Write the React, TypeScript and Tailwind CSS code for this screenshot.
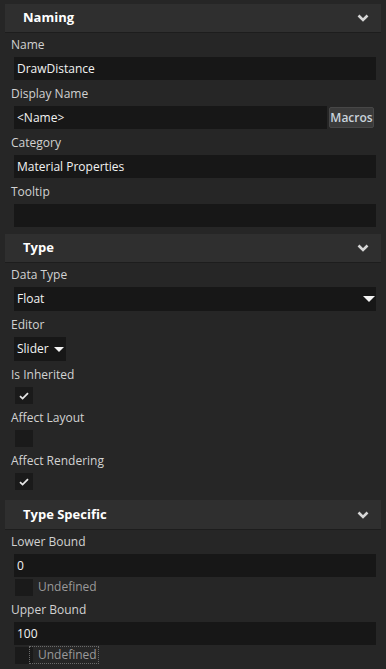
import React from "react";

const font = { fontFamily: '"Open Sans", "Noto Sans", sans-serif' };

const Chevron = () => (
  <svg width="12" height="8" viewBox="0 0 12 8" className="block">
    <path d="M1.5 1.5 L6 6 L10.5 1.5" fill="none" stroke="#d6d6d6" strokeWidth="2.6" />
  </svg>
);

const Caret = ({ w = 12, h = 6 }: { w?: number; h?: number }) => (
  <svg width={w} height={h} viewBox={`0 0 ${w} ${h}`} className="block">
    <polygon points={`0,0 ${w},0 ${w / 2},${h}`} fill="#f4f4f4" />
  </svg>
);

const Check = () => (
  <svg width="10" height="8" viewBox="0 0 10 8" className="block">
    <path d="M1 4.2 L3.6 6.6 L9 1.2" fill="none" stroke="#e6e6e6" strokeWidth="1.8" />
  </svg>
);

const Header = ({ title, tall }: { title: string; tall?: boolean }) => (
  <div
    className={
      (tall ? "h-[30px] " : "h-[29px] ") +
      "mx-[5px] bg-[#2f2f2f] border-b border-[#1d1d1d] flex items-center justify-between pl-[18px] pr-[12px]"
    }
  >
    <span className="text-[13px] font-bold text-white">{title}</span>
    <Chevron />
  </div>
);

const Label = ({ text }: { text: string }) => (
  <div className="h-[24px] pl-[11px] flex items-center text-[12px] text-[#d2d2d2]">{text}</div>
);

const TextBox = ({ value }: { value: string }) => (
  <div className="ml-[14px] mr-[10px] h-[23px] bg-[#171717] flex items-center pl-[3px] text-[12px] text-[#f2f2f2]">
    {value}
  </div>
);

const CheckBox = ({ checked }: { checked: boolean }) => (
  <div className="w-[18px] h-[17px] bg-[#1a1a1a] flex items-center justify-center">
    {checked && <Check />}
  </div>
);

const CheckField = ({ label, checked }: { label: string; checked: boolean }) => (
  <div className="mt-[2px]">
    <Label text={label} />
    <div className="ml-[15px]">
      <CheckBox checked={checked} />
    </div>
  </div>
);

const Undefined = ({ focused }: { focused?: boolean }) => (
  <div className="ml-[15px] mt-[1px] flex items-center h-[18px]">
    <CheckBox checked={false} />
    <div
      className={
        focused
          ? "ml-[-4px] h-[18px] pl-[8px] pr-[1px] flex items-center border border-dotted border-[#6a6a6a] text-[12px] text-[#9a9a9a]"
          : "ml-[5px] flex items-center text-[12px] text-[#9a9a9a]"
      }
    >
      Undefined
    </div>
  </div>
);

export default function App() {
  return (
    <div className="w-[386px] h-[669px] overflow-hidden bg-[#262626] pt-[4px]" style={font}>
      <Header title="Naming" />
      <div className="pb-[7px]">
        <Label text="Name" />
        <TextBox value="DrawDistance" />
        <div className="mt-[2px]">
          <Label text="Display Name" />
          <div className="ml-[14px] mr-[10px] flex items-center gap-[2px]">
            <div className="flex-1 h-[23px] bg-[#171717] flex items-center pl-[3px] text-[12px] text-[#f2f2f2]">
              &lt;Name&gt;
            </div>
            <button className="w-[45px] h-[21px] mr-[2px] bg-[#3a3a3a] border border-[#474747] rounded-[2px] text-[12px] font-semibold text-[#c9d3dc] flex items-center justify-center">
              Macros
            </button>
          </div>
        </div>
        <div className="mt-[2px]">
          <Label text="Category" />
          <TextBox value="Material Properties" />
        </div>
        <div className="mt-[2px]">
          <Label text="Tooltip" />
          <TextBox value="" />
        </div>
      </div>

      <Header title="Type" />
      <div className="pb-[10px]">
        <Label text="Data Type" />
        <div className="ml-[14px] mr-[10px] h-[24px] bg-[#171717] flex items-center justify-between pl-[3px] pr-[1px] text-[12px] text-[#f2f2f2]">
          <span>Float</span>
          <Caret />
        </div>
        <div className="mt-[2px]">
          <Label text="Editor" />
          <div className="ml-[14px] w-[52px] h-[24px] bg-[#171717] flex items-center pl-[3px] gap-[5px] text-[12px] text-[#f2f2f2]">
            <span>Slider</span>
            <Caret w={10} h={5} />
          </div>
        </div>
        <CheckField label="Is Inherited" checked />
        <CheckField label="Affect Layout" checked={false} />
        <CheckField label="Affect Rendering" checked />
      </div>

      <Header title="Type Specific" tall />
      <div>
        <Label text="Lower Bound" />
        <TextBox value="0" />
        <Undefined />
        <div className="mt-[2px]">
          <Label text="Upper Bound" />
          <TextBox value="100" />
          <Undefined focused />
        </div>
      </div>
    </div>
  );
}
